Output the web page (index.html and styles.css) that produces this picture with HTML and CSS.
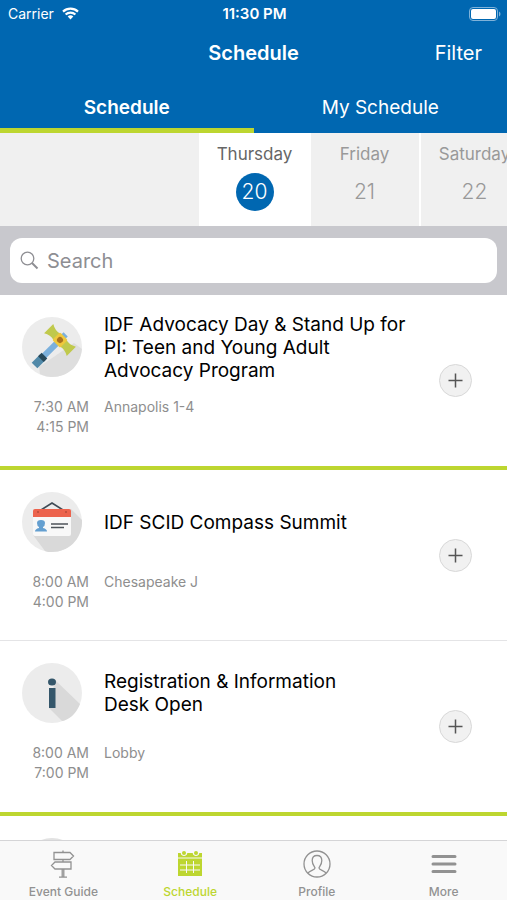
FILE: index.html
```html
<!DOCTYPE html>
<html lang="en">
<head>
    <meta charset="UTF-8">
    <meta name="viewport" content="width=device-width, initial-scale=1.0">
    <title>Schedule</title>
    <link rel="stylesheet" href="styles.css">
</head>
<body>
    <header>
        <div class="status-bar">
            <div class="carrier">
                <span>Carrier</span>
                <svg width="17" height="13" viewBox="0 0 17 13" fill="none" stroke="#fff" stroke-width="2.2">
                    <path d="M1 4.6C5.2.6 11.8.6 16 4.6"/>
                    <path d="M3.6 7.5C6.4 4.9 10.6 4.9 13.4 7.5"/>
                    <path d="M5.7 9.4C7.3 8 9.7 8 11.3 9.4L8.5 12.4Z" fill="#fff" stroke="none"/>
                </svg>
            </div>
            <span class="clock">11:30 PM</span>
            <svg class="battery" width="32" height="14" viewBox="0 0 32 14">
                <rect x=".5" y=".5" width="28" height="13" rx="3.5" fill="none" stroke="#7fb2d9"/>
                <rect x="2" y="2" width="25" height="10" rx="2" fill="#fff"/>
                <path d="M30 4.5C32 5.5 32 8.5 30 9.5Z" fill="#7fb2d9"/>
            </svg>
        </div>
        <div class="title-bar">
            <h1>Schedule</h1>
            <button type="button" class="filter-btn">Filter</button>
        </div>
        <nav class="tabs">
            <a href="#schedule" class="active">Schedule</a>
            <a href="#my-schedule">My Schedule</a>
        </nav>
    </header>

    <section class="days">
        <button type="button" class="day selected"><span>Thursday</span><b>20</b></button>
        <button type="button" class="day"><span>Friday</span><b>21</b></button>
        <button type="button" class="day"><span>Saturday</span><b>22</b></button>
    </section>

    <form class="search">
        <label class="search-box">
            <svg width="19" height="19" viewBox="0 0 19 19" fill="none" stroke="#8e8e93">
                <circle cx="7.5" cy="7.5" r="6.3" stroke-width="1.3"/>
                <path d="M12 12L17.5 17.5" stroke-width="2"/>
            </svg>
            <input type="search" placeholder="Search" aria-label="Search">
        </label>
    </form>

    <main id="schedule">
        <article class="event last">
            <svg class="event-icon" viewBox="0 0 60 60">
                <circle cx="30" cy="30" r="30" fill="#ececec"/>
                <path d="M52 26L60 32C58 49 46 60 30 60C26 60 22 59 18 57L17 50Z" fill="#dedede"/>
                <g transform="translate(38 23) rotate(45)">
                    <rect x="-3" y="-8" width="6" height="38" fill="#7bb0dc"/>
                    <path d="M-4 24H4V36H-4Z" fill="#5189a8"/>
                    <path d="M-4 22H4V27H-4Z" fill="#27485a"/>
                    <path d="M-16 -6.5Q-10 -3 -5 -4.5H5Q10 -3 16 -6.5V6.5Q10 3 5 4.5H-5Q-10 3 -16 6.5Z" fill="#c0c94c"/>
                    <rect x="-5.5" y="-5.5" width="11" height="11" rx="1.5" fill="#efc83d"/>
                    <circle r="3" fill="#a97321"/>
                </g>
            </svg>
            <h2>IDF Advocacy Day &amp; Stand Up for<br>PI: Teen and Young Adult<br>Advocacy Program</h2>
            <p class="time">7:30 AM<br>4:15 PM</p>
            <p class="place">Annapolis 1-4</p>
            <button type="button" class="add-btn" aria-label="Add to my schedule"><svg width="15" height="15" viewBox="0 0 15 15"><path d="M7.5 .5V14.5M.5 7.5H14.5" stroke="#555" stroke-width="1.5"/></svg></button>
        </article>

        <article class="event">
            <svg class="event-icon" viewBox="0 0 60 60">
                <circle cx="30" cy="30" r="30" fill="#ececec"/>
                <path d="M49 17L60 28V31C59 48 46 60 30 60C27 60 25 60 23 59L11 43Z" fill="#d9d9d9"/>
                <path d="M19 18L30 11L41 18" fill="none" stroke="#3f4b55" stroke-width="1.6"/>
                <path d="M11 24H49V42Q49 44 47 44H13Q11 44 11 42Z" fill="#f8f8f8"/>
                <path d="M13 17H47Q49 17 49 19V25H11V19Q11 17 13 17Z" fill="#ec634d"/>
                <circle cx="16" cy="20" r="1" fill="#b64a3a"/>
                <circle cx="44" cy="20" r="1" fill="#b64a3a"/>
                <path d="M15 31Q15 28 19 28T23 31Q23 34 21 35V36Q25 37 25 39.5H13Q13 37 17 36V35Q15 34 15 31Z" fill="#649fd0"/>
                <path d="M29 32H46M29 35.5H42" stroke="#4d5359" stroke-width="1.7"/>
            </svg>
            <h2>IDF SCID Compass Summit</h2>
            <p class="time">8:00 AM<br>4:00 PM</p>
            <p class="place">Chesapeake J</p>
            <button type="button" class="add-btn" aria-label="Add to my schedule"><svg width="15" height="15" viewBox="0 0 15 15"><path d="M7.5 .5V14.5M.5 7.5H14.5" stroke="#555" stroke-width="1.5"/></svg></button>
        </article>

        <article class="event last">
            <svg class="event-icon" viewBox="0 0 60 60">
                <circle cx="30" cy="30" r="30" fill="#ececec"/>
                <path d="M33 17L58 41C54 51 47 57 40 58L27 45Z" fill="#d9d9d9"/>
                <ellipse cx="30" cy="19" rx="4" ry="3.6" fill="#34566a"/>
                <rect x="27" y="25" width="6.5" height="20" fill="#34566a"/>
            </svg>
            <h2>Registration &amp; Information<br>Desk Open</h2>
            <p class="time">8:00 AM<br>7:00 PM</p>
            <p class="place">Lobby</p>
            <button type="button" class="add-btn" aria-label="Add to my schedule"><svg width="15" height="15" viewBox="0 0 15 15"><path d="M7.5 .5V14.5M.5 7.5H14.5" stroke="#555" stroke-width="1.5"/></svg></button>
        </article>

        <article class="event">
            <svg class="event-icon" viewBox="0 0 60 60">
                <circle cx="30" cy="30" r="30" fill="#e2e2e2"/>
            </svg>
        </article>
    </main>

    <nav class="tab-bar">
        <a href="#guide">
            <svg width="28" height="28" viewBox="0 0 28 28" fill="none" stroke="#929292" stroke-width="1.3">
                <path d="M5 2.5H21L24.5 6L21 9.5H5Z"/>
                <path d="M22 12H6L2.5 15.5L6 19H22Z"/>
                <path d="M14 .5V2.5M14 9.5V12M13.2 19V27M14.8 19V27M10 27.2H18"/>
            </svg>
            <span>Event Guide</span>
        </a>
        <a href="#schedule" class="active">
            <svg width="28" height="28" viewBox="0 0 28 28">
                <path d="M2 3H26V26H2Z" fill="#bdd630"/>
                <path d="M2 8H26" stroke="#f9f9f9"/>
                <path d="M5 2.5A3 3 0 0 0 11 2.5M17 2.5A3 3 0 0 0 23 2.5" fill="#f9f9f9" stroke="#f9f9f9"/>
                <circle cx="8" cy="3" r="2" fill="#bdd630"/>
                <circle cx="20" cy="3" r="2" fill="#bdd630"/>
                <path d="M10.5 11V23M17.5 11V23M4 15H24M4 20H24" stroke="#f9f9f9"/>
            </svg>
            <span>Schedule</span>
        </a>
        <a href="#profile">
            <svg width="28" height="28" viewBox="0 0 28 28" fill="none" stroke="#929292" stroke-width="1.3">
                <circle cx="14" cy="14" r="13"/>
                <path d="M5 23C7 20.5 12 20 12 18C12 17 9.2 15 9.2 10.5C9.2 7.5 11 5.5 14 5.5S18.8 7.5 18.8 10.5C18.8 15 16 17 16 18C16 20 21 20.5 23 23"/>
            </svg>
            <span>Profile</span>
        </a>
        <a href="#more">
            <svg width="28" height="28" viewBox="0 0 28 28" stroke="#929292" stroke-width="3" stroke-linecap="round">
                <path d="M3 6.5H25M3 14H25M3 21.5H25"/>
            </svg>
            <span>More</span>
        </a>
    </nav>
</body>
</html>
```
FILE: styles.css
```css
* {
    box-sizing: border-box;
}
body {
    display: flex;
    flex-direction: column;
    height: 100vh;
    margin: 0;
    background-color: #fff;
    color: #000;
    font-family: Inter, "Liberation Sans", sans-serif;
}
h1, h2, p {
    margin: 0;
    font-weight: 400;
}
a {
    text-decoration: none;
}
button {
    padding: 0;
    border: none;
    background: none;
    font-family: inherit;
    cursor: pointer;
}
svg {
    display: block;
}
header {
    background-color: #0067b1;
    color: #fff;
}
.status-bar, .title-bar {
    display: grid;
    grid-template-columns: 1fr auto 1fr;
    align-items: center;
}
.status-bar {
    height: 27px;
    padding: 0 6px 0 8px;
    font-size: 14px;
}
.carrier {
    display: flex;
    align-items: center;
    gap: 8px;
}
.clock {
    font-size: 15px;
    font-weight: 600;
}
.battery {
    justify-self: end;
}
.title-bar {
    height: 52px;
    padding: 0 25px;
}
h1 {
    grid-column: 2;
    font-size: 20px;
    font-weight: 600;
}
.filter-btn {
    justify-self: end;
    color: #fff;
    font-size: 20px;
}
.tabs {
    display: flex;
    height: 54px;
}
.tabs a {
    flex: 1;
    padding-top: 17px;
    border-bottom: 5px solid transparent;
    color: #fff;
    font-size: 19px;
    line-height: 24px;
    text-align: center;
}
.tabs .active {
    border-color: #bdd630;
    font-weight: 600;
}

/* Day picker, the selected day sits in the middle */
.days {
    display: flex;
    height: 93px;
    padding-left: calc(50% - 55px);
    overflow: hidden;
    background-color: #f0f0f0;
}
.day {
    display: flex;
    flex: none;
    flex-direction: column;
    align-items: center;
    width: 110px;
    padding-top: 9px;
    border-left: 2px solid #fff;
    color: #999;
    font-size: 17px;
    line-height: 24px;
}
.day b {
    width: 38px;
    margin-top: 7px;
    border-radius: 50%;
    font-size: 21px;
    font-weight: 300;
    line-height: 38px;
}
.day.selected {
    background-color: #fff;
    color: #666;
}
.day.selected b {
    background-color: #0067b1;
    color: #fff;
}

.search {
    padding: 12px 10px;
    background-color: #c8c8cd;
}
.search-box {
    display: flex;
    align-items: center;
    gap: 8px;
    height: 45px;
    padding: 0 10px;
    border-radius: 12px;
    background-color: #fff;
}
.search-box input {
    flex: 1;
    min-width: 0;
    padding: 0;
    border: none;
    outline: none;
    background: none;
    font-family: inherit;
    font-size: 20px;
}
.search-box input::placeholder {
    color: #8e8e93;
}

main {
    flex: 1;
    min-height: 0;
    overflow: hidden;
}
.event {
    display: grid;
    grid-template-columns: 89px 1fr 33px;
    grid-template-rows: 60px 46px;
    gap: 20px 15px;
    padding: 22px 35px 22px 0;
    border-bottom: 1px solid #e4e4e6;
}
.event.last {
    padding-bottom: 23px;
    border-bottom: 4px solid #bdd630;
}
.event-icon {
    width: 60px;
    height: 60px;
    margin-left: 22px;
}
.event h2 {
    align-self: center;
    font-size: 19px;
    line-height: 23px;
    white-space: nowrap;
}
.time, .place {
    color: #8e8e8e;
    font-size: 14px;
    line-height: 20px;
}
.time {
    text-align: right;
}
.add-btn {
    display: flex;
    grid-row: 1 / 3;
    grid-column: 3;
    align-self: center;
    align-items: center;
    justify-content: center;
    height: 33px;
    border: 1px solid #d8d8d8;
    border-radius: 50%;
    background-color: #f1f1f1;
}

.tab-bar {
    display: flex;
    height: 60px;
    border-top: 1px solid #d5d5d7;
    background-color: #f9f9f9;
}
.tab-bar a {
    display: flex;
    flex: 1;
    flex-direction: column;
    align-items: center;
    gap: 6px;
    padding-top: 9px;
    color: #929292;
    font-size: 12px;
    font-weight: 500;
    line-height: 16px;
}
.tab-bar .active {
    color: #bdd630;
}
```
